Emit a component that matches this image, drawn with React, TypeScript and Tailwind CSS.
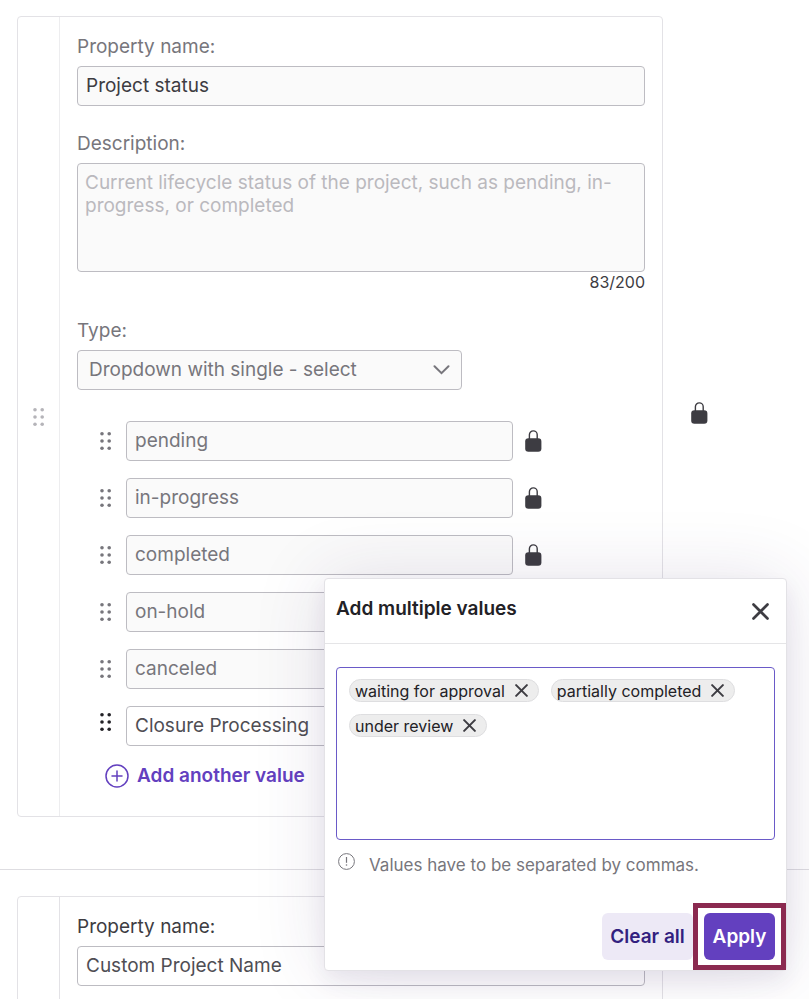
import { useState } from "react";

const lockedValues = ["pending", "in-progress", "completed", "on-hold", "canceled"];
const initialChips = ["waiting for approval", "partially completed", "under review"];

function GripIcon({ className }: { className: string }) {
  return (
    <svg width="12" height="20" viewBox="0 0 12 20" fill="currentColor" className={className} aria-hidden="true">
      <circle cx="2" cy="2.7" r="1.8" />
      <circle cx="9.2" cy="2.7" r="1.8" />
      <circle cx="2" cy="10" r="1.8" />
      <circle cx="9.2" cy="10" r="1.8" />
      <circle cx="2" cy="17.3" r="1.8" />
      <circle cx="9.2" cy="17.3" r="1.8" />
    </svg>
  );
}

function LockIcon() {
  return (
    <svg width="17" height="22" viewBox="0 0 17 22" className="shrink-0 text-[#3d3c42]" role="img" aria-label="Locked">
      <path d="M4.4 9V4.8a3.9 3.9 0 0 1 7.8 0V9" fill="none" stroke="currentColor" strokeWidth="1.4" />
      <rect x="0.2" y="8.2" width="16.2" height="13.6" rx="3.2" fill="currentColor" />
    </svg>
  );
}

function CrossIcon({ size }: { size: number }) {
  return (
    <svg width={size} height={size} viewBox="0 0 16 16" fill="none" stroke="currentColor" strokeWidth="2.5" strokeLinecap="round" aria-hidden="true">
      <path d="M1.4 1.4l13.2 13.2M14.6 1.4L1.4 14.6" />
    </svg>
  );
}

function PlusCircleIcon() {
  return (
    <svg width="24" height="24" viewBox="0 0 24 24" fill="none" stroke="currentColor" strokeWidth="1.5" strokeLinecap="round" aria-hidden="true">
      <circle cx="12" cy="12" r="11" />
      <path d="M12 7v10M7 12h10" />
    </svg>
  );
}

function InfoIcon() {
  return (
    <svg width="17" height="17" viewBox="0 0 17 17" fill="none" stroke="currentColor" strokeWidth="1" aria-hidden="true" className="shrink-0">
      <circle cx="8.5" cy="8.5" r="7.9" />
      <path d="M8.5 4v5.8" strokeWidth="1.2" />
      <circle cx="8.5" cy="12" r="0.8" fill="currentColor" stroke="none" />
    </svg>
  );
}

function Modal() {
  const [chips, setChips] = useState(initialChips);
  return (
    <div
      role="dialog"
      aria-labelledby="modal-title"
      className="absolute top-[578px] right-[22px] w-[463px] rounded border border-[#e3e2e6] bg-white shadow-[0_10px_20px_rgba(60,40,100,0.08),0_0_72px_rgba(60,40,100,0.13)]"
    >
      <div className="flex h-[65px] items-center justify-between border-b border-[#e5e5e7] pr-[17px] pl-[11px]">
        <h2 id="modal-title" className="pb-1 text-[19px] leading-6 font-semibold text-[#222126]">Add multiple values</h2>
        <button type="button" aria-label="Close" className="text-[#3d3c42]">
          <CrossIcon size={17} />
        </button>
      </div>
      <div className="px-[11px] pt-[23px]">
        <div className="flex h-[173px] flex-wrap content-start gap-3 rounded border border-[#6a5ac8] p-3 pt-[11px]">
          {chips.map((chip) => (
            <span key={chip} className="flex h-[23px] items-center gap-2.5 rounded-full border border-[#dedee0] bg-[#ededed] pr-2.5 pl-[5px] text-base text-[#222126]">
              {chip}
              <button type="button" aria-label={`Remove ${chip}`} onClick={() => setChips(chips.filter((c) => c !== chip))} className="text-[#3d3c42]">
                <CrossIcon size={13} />
              </button>
            </span>
          ))}
          <input aria-label="New values" className="h-[23px] min-w-0 flex-1 text-base outline-none" />
        </div>
        <div className="flex gap-3.5 pt-[13px] pl-0.5 text-[#77767c]">
          <InfoIcon />
          <p className="text-[17px] leading-[25px]">Values have to be separated by commas.</p>
        </div>
      </div>
      <div className="flex items-center justify-end pt-[25px]">
        <button type="button" className="h-[47px] w-[91px] rounded-md bg-[#ede9f6] pt-0.5 text-[19px] font-semibold text-[#331f80]">Clear all</button>
        <div className="border-[5px] border-[#8b2a50] px-1.5 py-[5px]">
          <button type="button" className="h-[47px] w-[71px] rounded-md bg-[#6340bf] pt-0.5 text-[19px] font-semibold text-white">Apply</button>
        </div>
      </div>
    </div>
  );
}

const label = "block text-[19px] leading-[26px]";
const box = "rounded border border-[#bdbcc2] text-[19px]";

export default function App() {
  return (
    <main className="relative h-screen min-w-[640px] overflow-hidden bg-white pt-4 font-[Inter,sans-serif]">
      <div className="flex items-stretch pl-[17px]">
        <section className="flex min-w-0 flex-1 rounded border border-[#e3e2e6]">
          <div className="flex w-[42px] shrink-0 items-center justify-center border-r border-[#ededef]">
            <GripIcon className="text-[#b5b4b9]" />
          </div>
          <div className="min-w-0 flex-1 px-[17px] pt-[17px] pb-7">
            <label htmlFor="name" className={`${label} text-[#77767c]`}>Property name:</label>
            <input id="name" defaultValue="Project status" className={`${box} mt-1.5 h-10 w-full bg-[#fafafa] px-2 pb-0.5 text-[#3d3c42]`} />

            <label htmlFor="description" className={`${label} mt-[25px] text-[#77767c]`}>Description:</label>
            <textarea
              id="description"
              defaultValue="Current lifecycle status of the project, such as pending, in-progress, or completed"
              className={`${box} mt-1.5 block h-[109px] w-full resize-none bg-[#fafafa] px-[7px] py-[7px] leading-[23px] text-[#bab9be]`}
            />
            <p className="text-right text-base leading-5 text-[#3d3c42]">83/200</p>

            <label htmlFor="type" className={`${label} mt-[26px] text-[#77767c]`}>Type:</label>
            <div className="relative mt-1.5 w-[385px]">
              <select id="type" className={`${box} block h-10 w-full appearance-none bg-[#fafafa] px-[11px] text-[#77767c]`}>
                <option>Dropdown with single - select</option>
              </select>
              <svg width="17" height="10" viewBox="0 0 17 10" fill="none" stroke="#77767c" strokeWidth="2" strokeLinecap="round" className="pointer-events-none absolute top-[15px] right-3" aria-hidden="true">
                <path d="M1.5 1.2l7 7 7-7" />
              </svg>
            </div>

            <ul className="mt-[31px] flex flex-col gap-[17px] pl-[23px]">
              {lockedValues.map((value) => (
                <li key={value} className="flex items-center">
                  <GripIcon className="shrink-0 text-[#77767c]" />
                  <input aria-label={`Value ${value}`} defaultValue={value} className={`${box} mr-3 ml-3.5 h-10 w-[387px] bg-[#fafafa] px-2 pb-0.5 text-[#77767c]`} />
                  <LockIcon />
                </li>
              ))}
              <li className="flex items-center">
                <GripIcon className="mb-2 shrink-0 text-[#222126]" />
                <input aria-label="Value Closure Processing" defaultValue="Closure Processing" className={`${box} ml-3.5 h-10 w-[387px] bg-white px-2 pb-0.5 text-[#4f4e54]`} />
              </li>
            </ul>
            <button type="button" className="mt-[18px] ml-7 flex items-center gap-2 text-[19px] leading-6 font-semibold text-[#6340bf]">
              <PlusCircleIcon />
              Add another value
            </button>
          </div>
        </section>
        <div className="flex w-[146px] shrink-0 items-center pb-2 pl-7">
          <LockIcon />
        </div>
      </div>

      <hr className="mt-[52px] border-[#dedde1]" />

      <div className="flex pt-[26px] pr-[146px] pl-[17px]">
        <section className="flex min-w-0 flex-1 rounded border border-[#e3e2e6]">
          <div className="w-[42px] shrink-0 border-r border-[#e3e2e6]" />
          <div className="min-w-0 flex-1 px-[17px] pt-[17px] pb-8">
            <label htmlFor="custom-name" className={`${label} text-[#3d3c42]`}>Property name:</label>
            <input id="custom-name" defaultValue="Custom Project Name" className={`${box} mt-1.5 h-10 w-full bg-white px-2 pb-0.5 text-[#4f4e54]`} />
          </div>
        </section>
      </div>

      <Modal />
    </main>
  );
}
